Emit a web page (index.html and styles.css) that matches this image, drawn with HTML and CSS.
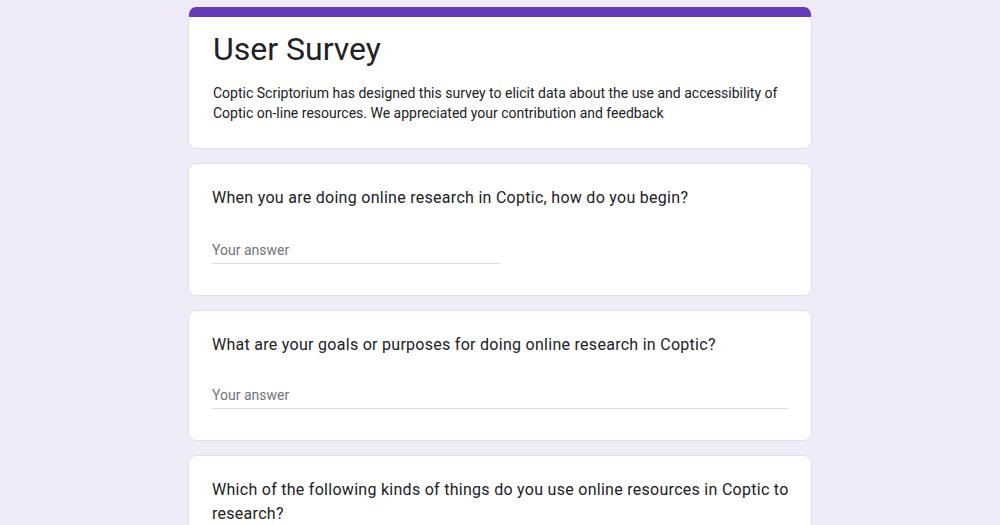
FILE: index.html
```html
<!DOCTYPE html>
<html lang="en">
<head>
<meta charset="utf-8">
<title>User Survey</title>
<link rel="stylesheet" href="styles.css">
</head>
<body>
<main class="form">
  <section class="card card-head">
    <div class="bar"></div>
    <div class="head-body">
      <h1 class="title">User Survey</h1>
      <p class="desc">Coptic Scriptorium has designed this survey to elicit data about the use and accessibility of Coptic on-line resources. We appreciated your contribution and feedback</p>
    </div>
  </section>
  <section class="card q">
    <div class="q-title">When you are doing online research in Coptic, how do you begin?</div>
    <div class="answer half">Your answer</div>
  </section>
  <section class="card q">
    <div class="q-title">What are your goals or purposes for doing online research in Coptic?</div>
    <div class="answer full">Your answer</div>
  </section>
  <section class="card q">
    <div class="q-title">Which of the following kinds of things do you use online resources in Coptic to research?</div>
  </section>
</main>
</body>
</html>
```
FILE: styles.css
```css
* { box-sizing: border-box; }
html, body { margin: 0; padding: 0; }
body {
  background: #efebf8;
  font-family: Roboto, "Liberation Sans", sans-serif;
  color: #202124;
  overflow: hidden;
  height: 525px;
}
.form {
  width: 624px;
  margin: 0 auto;
  padding-top: 7px;
  display: flex;
  flex-direction: column;
  gap: 14px;
}
.card {
  background: #fff;
  border: 1px solid #e2dfe8;
  border-radius: 8px;
  overflow: hidden;
}
.card-head { border-top: none; }
.bar {
  height: 10px;
  background: #673ab7;
}
.head-body {
  padding: 12px 24px 25px;
}
.title {
  margin: 0;
  font-size: 32px;
  line-height: 40px;
  font-weight: 400;
  color: #202124;
}
.desc {
  margin: 14px 0 0;
  font-size: 14px;
  line-height: 20px;
  color: #202124;
}
.q {
  padding: 22px 23px 31px;
}
.q-title {
  font-size: 16px;
  line-height: 24px;
  letter-spacing: 0.28px;
  margin-right: -8px;
  color: #202124;
}
.answer {
  margin-top: 30px;
  font-size: 14px;
  line-height: 20px;
  padding-bottom: 3px;
  color: #70757a;
  border-bottom: 1px solid #dadce0;
}
.answer.half { width: 288px; }
.answer.full { margin-top: 28px; }
```
